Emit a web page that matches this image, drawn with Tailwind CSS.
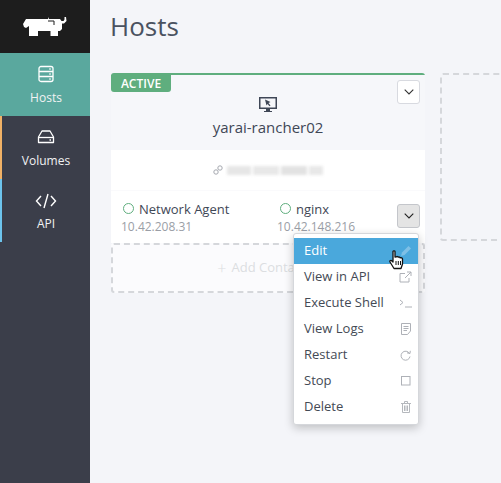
<!DOCTYPE html>
<html lang="en">
<head>
    <meta charset="UTF-8">
    <title>Hosts</title>
    <script src="https://cdn.jsdelivr.net/npm/@tailwindcss/browser@4"></script>
</head>
<body class="bg-[#f4f5f9] font-['Open_Sans',sans-serif] overflow-hidden">
    <div class="flex h-[483px] w-[501px] overflow-hidden">
        <!-- Sidebar -->
        <nav class="w-[90px] shrink-0 bg-[#3b3e4a] text-[#f1f2f3] text-[12px]">
            <div class="h-[53px] bg-[#1d1d1d] flex items-center justify-center">
                <svg width="44" height="21" viewBox="0 0 44 21" fill="#fff">
                    <path d="M0 8L3 3H25V1L26 3H37L38.500 5H40.500L41.500 3.500V1H43L43.500 5L41 7.500H39V13L37 15H35V20H27.500V15H15V20H6V10L3 12L1 11Z"/>
                    <path d="M25 5H31V9" fill="none" stroke="#1d1d1d" stroke-width="1"/>
                </svg>
            </div>
            <a class="h-[63px] bg-[#5aa89e] flex flex-col items-center pt-[12px] pl-[2px]">
                <svg width="18" height="18" viewBox="0 0 18 18" fill="none" stroke="#fff" stroke-width="1.300">
                    <rect x="2" y="1.500" width="14" height="15" rx="2"/>
                    <path d="M2 6.500H16M2 11.500H16"/>
                    <path d="M12 4H14M12 9H14M12 14H14" stroke-width="1.200"/>
                </svg>
                <span class="mt-[7px] leading-[16px]">Hosts</span>
            </a>
            <a class="h-[63px] border-l-2 border-[#f0b166] flex flex-col items-center pt-[13px]">
                <svg width="18" height="16" viewBox="0 0 18 16" fill="none" stroke="#fff" stroke-width="1.300">
                    <path d="M5 2H13L16.500 8V13.500H1.500V8Z" stroke-linejoin="round"/>
                    <path d="M1.500 8.500H16.500"/>
                    <path d="M12.500 11H14"/>
                </svg>
                <span class="mt-[8px] leading-[16px]">Volumes</span>
            </a>
            <a class="h-[63px] border-l-2 border-[#6cc3ec] flex flex-col items-center pt-[14px]">
                <svg width="22" height="16" viewBox="0 0 22 16" fill="none" stroke="#fff" stroke-width="1.400">
                    <path d="M6 3L1.500 8L6 13M16 3L20.500 8L16 13M13 1L9 15"/>
                </svg>
                <span class="mt-[7px] leading-[16px]">API</span>
            </a>
        </nav>

        <!-- Main -->
        <main class="flex-1 pl-[21px] min-w-0">
            <h1 class="text-[26px] leading-[32px] pt-[10px] -ml-[1px] text-[#4a5260] font-normal">Hosts</h1>
            <div class="flex gap-[15px] mt-[31px] w-[500px]">
                <div class="relative w-[314px] shrink-0">
                    <div class="bg-white border-t-2 border-[#5fae7e] rounded-t-[3px]">
                        <!-- Card header -->
                        <div class="relative h-[75px] bg-[#f6f7fa] flex flex-col items-center pt-[21px]">
                            <span class="absolute left-0 top-0 h-[17px] w-[60px] bg-[#5fae7e] rounded-br-[3px] rounded-bl-[3px] text-white text-[12px] font-semibold leading-[17px] text-center">ACTIVE</span>
                            <span class="absolute right-[5px] top-[5px] w-[23px] h-[24px] bg-white border border-[#d8dae0] rounded-[3px] flex items-center justify-center">
                                <svg width="10" height="6" viewBox="0 0 10 6" fill="none" stroke="#333" stroke-width="1.100"><path d="M.7.7L5 5L9.300.7"/></svg>
                            </span>
                            <svg width="18" height="17" viewBox="0 0 18 17" fill="#3f4756">
                                <path fill-rule="evenodd" d="M0 1H18V13H11V15H13V16H5V15H7V13H0ZM1.500 2.500V11.500H16.500V2.500Z"/>
                                <path d="M6 3.500L11.500 6L9.500 7L11.500 9.500L10.500 10.300L8.500 8L7.500 9.500Z"/>
                            </svg>
                            <span class="mt-[4px] text-[15px] leading-[20px] text-[#3f4756]">yarai-rancher02</span>
                        </div>
                        <!-- Host IP, blurred in the original -->
                        <div class="h-[40px] flex items-center justify-center gap-[4px]">
                            <svg width="10" height="10" viewBox="0 0 10 10" fill="none" stroke="#a5a8af" stroke-width="1"><circle cx="3" cy="7" r="2.200"/><circle cx="7" cy="3" r="2.200"/></svg>
                            <div class="flex items-center gap-[2px] blur-[1.5px]">
                                <span class="w-[24px] h-[9px] bg-[#e6e6e6]"></span>
                                <span class="w-[26px] h-[9px] bg-[#e8e8e8]"></span>
                                <span class="w-[26px] h-[9px] bg-[#e2e2e2]"></span>
                                <span class="w-[14px] h-[9px] bg-[#e8e8e8]"></span>
                            </div>
                        </div>
                        <!-- Containers -->
                        <div class="relative h-[53px] border-t border-[#fafafc] grid grid-cols-[157px_157px] pt-[9px]">
                            <div class="pl-[10px]">
                                <div class="flex items-center gap-[5px] text-[13px] leading-[18px] text-[#3f4756] pl-[2px]">
                                    <span class="w-[11px] h-[11px] shrink-0 rounded-full border-[1.5px] border-[#5fae7e] -mt-[2px]"></span>Network Agent
                                </div>
                                <div class="text-[12px] leading-[16px] mt-[1px] text-[#9a9ea6]">10.42.208.31</div>
                            </div>
                            <div class="pl-[10px] -ml-[1px]">
                                <div class="flex items-center gap-[5px] text-[13px] leading-[18px] text-[#3f4756] pl-[3px]">
                                    <span class="w-[11px] h-[11px] shrink-0 rounded-full border-[1.5px] border-[#5fae7e] -mt-[2px]"></span>nginx
                                </div>
                                <div class="text-[12px] leading-[16px] mt-[1px] text-[#9a9ea6]">10.42.148.216</div>
                            </div>
                            <span class="absolute right-[5px] top-[13px] w-[23px] h-[24px] bg-[#e4e4e4] border border-[#c4c6cb] rounded-[3px] flex items-center justify-center">
                                <svg width="10" height="6" viewBox="0 0 10 6" fill="none" stroke="#222" stroke-width="1.100"><path d="M.7.7L5 5L9.300.7"/></svg>
                            </span>
                        </div>
                    </div>
                    <div class="h-[50px] bg-white/60 border-2 border-dashed border-[#d5d7db] rounded-[3px] flex items-center justify-center text-[13px] text-[#dcdee1]">
                        <span class="text-[16px] font-light mr-[5px] leading-none">+</span>Add Container
                    </div>

                    <!-- Dropdown -->
                    <div class="absolute left-[182px] top-[160px] w-[126px] h-[192px] bg-white border border-[#d5d7db] rounded-[3px] shadow-[0_3px_10px_rgba(0,0,0,0.22)] py-[4px] text-[13px] text-[#444a55]">
                        <div class="h-[26px] bg-[#4aa8dc] text-white flex items-center justify-between pl-[10px] pr-[6px]">
                            Edit
                            <svg width="12" height="12" viewBox="0 0 12 12" fill="#7fc0e6"><path d="M1 11L2 7.500L8.500 1L11 3.500L4.500 10Z"/></svg>
                        </div>
                        <div class="h-[26px] flex items-center justify-between pl-[10px] pr-[6px]">
                            View in API
                            <svg width="13" height="12" viewBox="0 0 13 12" fill="none" stroke="#aeb1b7"><path d="M6 2.500H1V11H10V7M6 7L12 1M8 1H12V5"/></svg>
                        </div>
                        <div class="h-[26px] flex items-center justify-between pl-[10px] pr-[6px]">
                            Execute Shell
                            <svg width="13" height="10" viewBox="0 0 13 10" fill="none" stroke="#aeb1b7"><path d="M1 2L4 4.500L1 7M6 9H13"/></svg>
                        </div>
                        <div class="h-[26px] flex items-center justify-between pl-[10px] pr-[7px]">
                            View Logs
                            <svg width="10" height="12" viewBox="0 0 10 12" fill="none" stroke="#aeb1b7"><path d="M.5.500H9.500V8L6.500 11.500H.5ZM2.500 3.500H7.500M2.500 5.500H7.500M2.500 7.500H6"/></svg>
                        </div>
                        <div class="h-[26px] flex items-center justify-between pl-[10px] pr-[7px]">
                            Restart
                            <svg width="11" height="11" viewBox="0 0 11 11" fill="none" stroke="#aeb1b7"><path d="M9.500 3.500A4.500 4.500 0 1 0 10 6.500M7 2.800L10 3.500L10.300.8"/></svg>
                        </div>
                        <div class="h-[26px] flex items-center justify-between pl-[10px] pr-[7px]">
                            Stop
                            <svg width="10" height="10" viewBox="0 0 10 10" fill="none" stroke="#aeb1b7"><rect x=".5" y=".5" width="8.500" height="8.500"/></svg>
                        </div>
                        <div class="h-[26px] flex items-center justify-between pl-[10px] pr-[7px]">
                            Delete
                            <svg width="10" height="12" viewBox="0 0 10 12" fill="none" stroke="#b5b8bd"><path d="M0 2.500H10M3.500 2.500V.5H6.500V2.500M1.500 2.500V11.500H8.500V2.500M3.500 4.500V10M5 4.500V10M6.500 4.500V10"/></svg>
                        </div>
                    </div>
                    <!-- Mouse pointer -->
                    <svg class="absolute left-[278px] top-[177px]" width="15" height="20" viewBox="0 0 15 20">
                        <path d="M4 1.500C4 .6 6 .6 6 1.500V7L7.500 6.800C8 6.300 9 6.500 9.300 7.200C10 6.800 11 7 11.200 7.800C12 7.400 13.500 7.800 13.500 9V14L12 18.500H5L1 12C.3 10.800 2 10 3 11L4 12Z" fill="#fff" stroke="#111" stroke-width="1.300" stroke-linejoin="round"/>
                        <path d="M7 11V15M9.300 11V15M11.500 11V15" stroke="#111" stroke-width="1"/>
                    </svg>
                </div>
                <!-- Empty slot -->
                <div class="w-[80px] h-[168px] border-2 border-dashed border-[#d5d7db] rounded-[3px] shrink-0"></div>
            </div>
        </main>
    </div>
</body>
</html>
